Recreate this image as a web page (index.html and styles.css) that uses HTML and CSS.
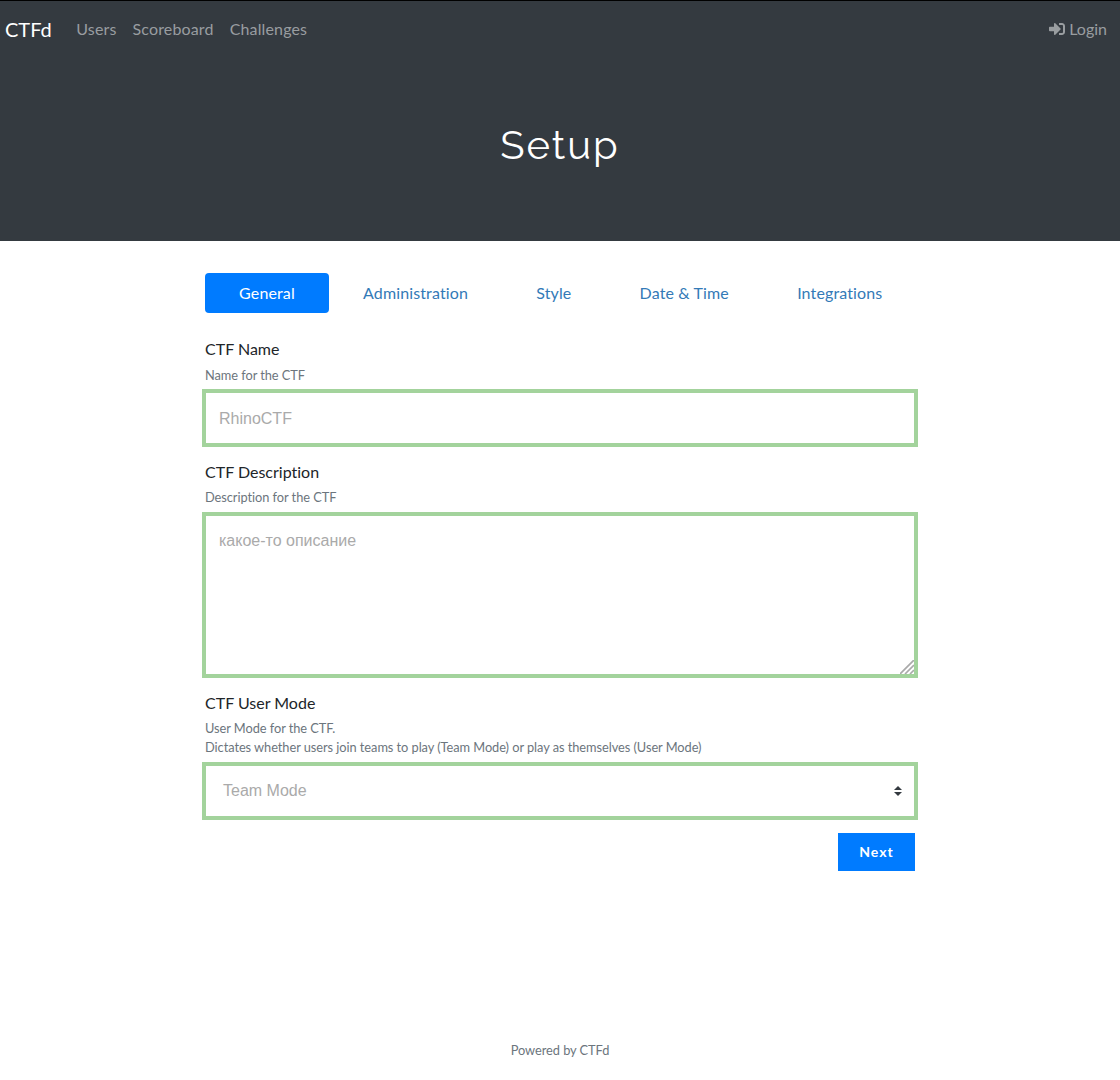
FILE: index.html
```html
<!DOCTYPE html>
<html lang="en">
<head>
<meta charset="utf-8">
<title>CTFd</title>
<link rel="stylesheet" href="styles.css">
</head>
<body>
<nav class="navbar">
  <a class="brand">CTFd</a>
  <a class="nav-link">Users</a>
  <a class="nav-link">Scoreboard</a>
  <a class="nav-link">Challenges</a>
  <a class="nav-link login"><svg class="login-icon" viewBox="0 0 512 512"><path fill="currentColor" d="M416 448h-84c-6.600 0-12-5.400-12-12v-40c0-6.600 5.400-12 12-12h84c17.700 0 32-14.300 32-32V160c0-17.700-14.300-32-32-32h-84c-6.600 0-12-5.400-12-12V76c0-6.600 5.400-12 12-12h84c53 0 96 43 96 96v192c0 53-43 96-96 96zm-47-209L201 71c-15-15-41-4.500-41 17v96H24c-13.300 0-24 10.700-24 24v96c0 13.300 10.700 24 24 24h136v96c0 21.500 26 32 41 17l168-168c9.300-9.400 9.300-24.600 0-34z"/></svg>Login</a>
</nav>
<header class="jumbotron"><h1>Setup</h1></header>
<main class="content">
  <div class="tabs">
    <a class="tab active">General</a>
    <a class="tab">Administration</a>
    <a class="tab">Style</a>
    <a class="tab">Date &amp; Time</a>
    <a class="tab">Integrations</a>
  </div>
  <section class="group name">
    <label>CTF Name</label>
    <small>Name for the CTF</small>
    <div class="field">RhinoCTF</div>
  </section>
  <section class="group description">
    <label>CTF Description</label>
    <small>Description for the CTF</small>
    <div class="field area">какое-то описание<svg class="grip" viewBox="0 0 14 14"><path d="M0 14 14 0M5 14l9-9M10 14l4-4" stroke="#aaa" stroke-width="1.700"/></svg></div>
  </section>
  <section class="group mode">
    <label>CTF User Mode</label>
    <small>User Mode for the CTF.<br>Dictates whether users join teams to play (Team Mode) or play as themselves (User Mode)</small>
    <div class="field select">Team Mode<svg class="arrows" viewBox="0 0 4 5"><path fill="#343a40" d="M2 0L0 2h4zm0 5L0 3h4z"/></svg></div>
  </section>
  <button class="next">Next</button>
</main>
<footer class="footer">Powered by CTFd</footer>
</body>
</html>
```
FILE: styles.css
```css
* { box-sizing: border-box; }
body {
  margin: 0;
  height: 1080px;
  overflow: hidden;
  display: flex;
  flex-direction: column;
  font: 16px/24px Lato, sans-serif;
  font-variant-ligatures: no-common-ligatures;
  color: #212529;
  background: #fff;
}
.navbar {
  height: 57px;
  padding: 0 13px 0 5px;
  border-top: 1px solid #000;
  background: #343a40;
  display: flex;
  align-items: center;
}
.brand { color: #fff; font-size: 20px; margin-right: 24.500px; }
.nav-link { color: #999da0; margin-right: 16px; letter-spacing: .15px; }
.login { margin: 0 0 0 auto; display: flex; align-items: center; gap: 4px; letter-spacing: 0; }
.login-icon { width: 16px; height: 16px; }
.jumbotron {
  height: 184px;
  padding-top: 64px;
  background: #343a40;
  text-align: center;
}
h1 {
  margin: 0;
  color: #fff;
  font: 400 40px/48px Raleway, Lato, sans-serif;
  letter-spacing: 2px;
}
.content {
  width: 710px;
  margin-left: 205px;
  padding-top: 32px;
  display: flex;
  flex-direction: column;
}
.tabs { display: flex; height: 40px; }
.tab { padding: 8px 34.100px; color: #337ab7; white-space: nowrap; letter-spacing: .13px; }
.tab.active { width: 124px; background: #007bff; color: #fff; border-radius: 4px; }
.group { display: flex; flex-direction: column; }
.name { margin-top: 24px; }
.name small { padding-top: 1px; height: 19px; }
.name .field { padding-top: 14px; }
.description { margin-top: 13px; }
.mode { margin-top: 13px; }
label { height: 28px; }
small { font-size: 12.800px; line-height: 19px; letter-spacing: -.05px; color: #6c757d; white-space: nowrap; }
.field {
  position: relative;
  height: 58px;
  width: 716px;
  margin: 5px 0 0 -3px;
  padding: 13px;
  border: 4px solid #a3d39c;
  color: #aaa;
  font: 16px/24px "Liberation Sans", sans-serif;
}
.area { height: 166px; }
.select { padding-left: 17px; }
.grip { position: absolute; right: 0; bottom: 0; width: 14px; height: 14px; }
.arrows { position: absolute; right: 12px; top: 20px; width: 8px; height: 10px; }
.next {
  width: 77px;
  height: 38px;
  margin-top: 13px;
  padding: 0;
  align-self: flex-end;
  border: 0;
  background: #007bff;
  color: #fff;
  font: 700 14px/20px Lato, sans-serif;
  letter-spacing: 1px;
}
.footer { margin: auto 0 20px; text-align: center; font-size: 12.800px; line-height: 19px; letter-spacing: -.04px; color: #6c757d; }
```
